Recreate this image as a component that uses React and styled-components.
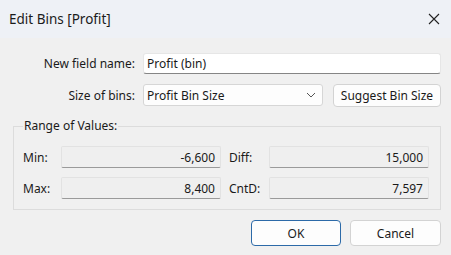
import React from "react";
import styled, { createGlobalStyle } from "styled-components";

const GlobalStyle = createGlobalStyle`
  html, body {
    margin: 0;
    padding: 0;
    background: #f0f0f0;
  }
  body {
    font-family: "Noto Sans", "Open Sans", sans-serif;
    font-size: 12px;
    color: #1a1a1a;
  }
`;

const Dialog = styled.div`
  width: 451px;
  height: 255px;
  background: #f0f0f0;
  overflow: hidden;
`;

const TitleBar = styled.div`
  height: 38px;
  background: #eef1f6;
  display: flex;
  align-items: center;
  justify-content: space-between;
  padding: 0 11px 0 9px;
`;

const Title = styled.span`
  font-size: 13.5px;
  color: #1b1b1b;
`;

const Body = styled.div`
  padding: 14px 10px 0 13px;
`;

const FormRow = styled.div`
  display: flex;
  align-items: center;
  height: 22px;
  margin-bottom: ${p => p.$mb || 0}px;
`;

const Label = styled.label`
  width: 130px;
  flex: none;
  text-align: right;
  white-space: nowrap;
  padding-right: 8px;
  box-sizing: border-box;
`;

const TextInput = styled.div`
  height: 21px;
  width: 298px;
  background: #ffffff;
  border: 1px solid #e6e6e6;
  border-bottom: 1px solid #858585;
  border-radius: 3px;
  display: flex;
  align-items: center;
  padding: 0 3px;
  box-sizing: border-box;
`;

const Select = styled.div`
  height: 22px;
  width: 180px;
  background: #fdfdfd;
  border: 1px solid #d6d6d6;
  border-radius: 3px;
  display: flex;
  align-items: center;
  justify-content: space-between;
  padding: 0 6px 0 3px;
  box-sizing: border-box;
`;

const Button = styled.button`
  height: ${p => p.$h || 23}px;
  width: ${p => p.$w}px;
  margin-left: ${p => p.$ml || 0}px;
  background: #fdfdfd;
  border: 1px solid ${p => (p.$primary ? "#2c6aa8" : "#d3d3d3")};
  border-radius: 4px;
  font-family: inherit;
  font-size: 12px;
  color: #1a1a1a;
  padding: 0;
  box-sizing: border-box;
  flex: none;
`;

const Group = styled.fieldset`
  margin: 12px 0 0 0;
  padding: 0 11px 10px 9px;
  border: 1px solid #dcdcdc;
  border-radius: 0;
  min-width: 0;
`;

const Legend = styled.legend`
  padding: 0 1px;
  margin-left: 0;
  line-height: 16px;
`;

const RangeGrid = styled.div`
  display: grid;
  grid-template-columns: 38px 160px 40px 160px;
  row-gap: 9px;
  margin-top: 12px;
  align-items: center;
  & > :nth-child(4n + 3) { margin-left: 8px; }
  & > :nth-child(4n + 4) { margin-left: 8px; width: 160px; }
`;

const ValueBox = styled.div`
  height: 22px;
  background: #efefef;
  border: 1px solid #e2e2e2;
  border-bottom: 1px solid #9a9a9a;
  border-radius: 2px;
  display: flex;
  align-items: center;
  justify-content: flex-end;
  padding: 0 5px;
  box-sizing: border-box;
`;

const Footer = styled.div`
  display: flex;
  justify-content: flex-end;
  gap: 9px;
  margin-top: 10px;
`;

const Chevron = () => (
  <svg width="10" height="6" viewBox="0 0 10 6">
    <path d="M1 1 L5 5 L9 1" fill="none" stroke="#555" strokeWidth="1" />
  </svg>
);

const CloseIcon = () => (
  <svg width="12" height="12" viewBox="0 0 12 12">
    <path d="M1 1 L11 11 M11 1 L1 11" fill="none" stroke="#222" strokeWidth="1.1" />
  </svg>
);

export default function App() {
  return (
    <Dialog>
      <GlobalStyle />
      <TitleBar>
        <Title>Edit Bins [Profit]</Title>
        <CloseIcon />
      </TitleBar>
      <Body>
        <FormRow $mb={10}>
          <Label>New field name:</Label>
          <TextInput>Profit (bin)</TextInput>
        </FormRow>
        <FormRow>
          <Label>Size of bins:</Label>
          <Select>
            <span>Profit Bin Size</span>
            <Chevron />
          </Select>
          <Button $w={108} $ml={10}>Suggest Bin Size</Button>
        </FormRow>

        <Group>
          <Legend>Range of Values:</Legend>
          <RangeGrid>
            <span>Min:</span>
            <ValueBox>-6,600</ValueBox>
            <span>Diff:</span>
            <ValueBox>15,000</ValueBox>
            <span>Max:</span>
            <ValueBox>8,400</ValueBox>
            <span>CntD:</span>
            <ValueBox>7,597</ValueBox>
          </RangeGrid>
        </Group>

        <Footer>
          <Button $primary $w={90} $h={26}>OK</Button>
          <Button $w={91} $h={26}>Cancel</Button>
        </Footer>
      </Body>
    </Dialog>
  );
}
